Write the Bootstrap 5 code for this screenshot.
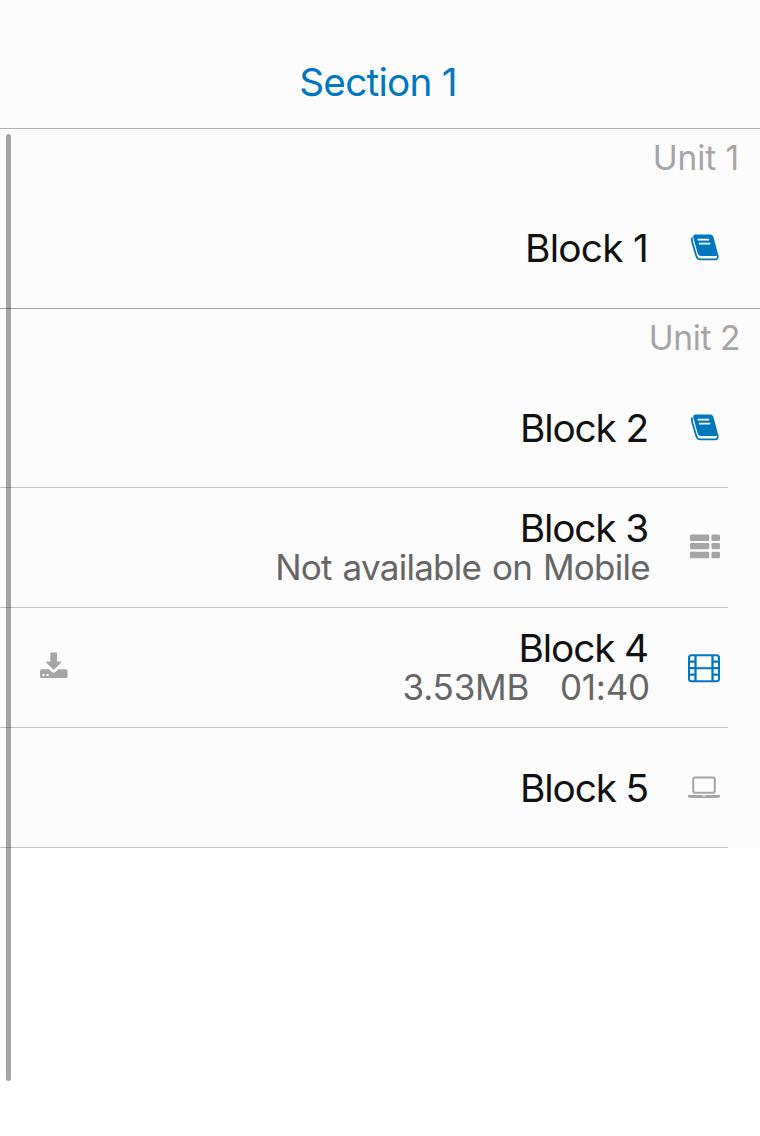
<!DOCTYPE html>
<html lang="en">
<head>
<meta charset="utf-8">
<meta name="viewport" content="width=device-width, initial-scale=1">
<title>Section 1</title>
<link href="https://cdn.jsdelivr.net/npm/bootstrap@5.3.0/dist/css/bootstrap.min.css" rel="stylesheet">
<style>
body{font-family:Inter,"Liberation Sans",sans-serif;background:#fff;color:#111;height:1136px;overflow:hidden}
.panel{background:#fcfcfc}
.top-bar{height:129px;padding:58px 4px 0 0;border-bottom:1px solid #b0b0b0;color:#0078bf;font-size:38.8px;line-height:48px;letter-spacing:-.78px}
.unit-label{height:59px;padding:7px 20px 0 0;font-size:33.5px;line-height:44px;color:#a6a5a5}
.unit-first .unit-label{padding-right:21px;letter-spacing:-.1px}
.unit-last .unit-label{letter-spacing:-.4px}
.block-row{height:120px;padding:0 40px}
.block-row+.block-row::before,.unit-last .block-row:last-child::after{content:"";position:absolute;left:0;right:32px;height:1px;background:#c4c4c6;top:-1px}
.unit-last .block-row:last-child::after{top:auto;bottom:0}
.unit-first{border-bottom:1px solid #a2a2a2}
.block-title{font-size:38.8px;line-height:40px;letter-spacing:-1.15px;padding-right:2px}
.unit-first .block-title{letter-spacing:-.75px}
.block-meta{font-size:35px;line-height:39px;color:#666;white-space:pre}
.two-lines{padding-bottom:2px}
.meta-note{letter-spacing:-.72px;word-spacing:1.6px}
.meta-size{letter-spacing:-.2px;word-spacing:.6px}
.block-icon{width:32px;margin-left:38px}
.blue{color:#0078bf}.gray{color:#a6a4a4}
svg{display:block;overflow:visible}
.scroll-thumb{left:6px;top:134px;width:5px;height:947px;border-radius:3px;background:rgba(0,0,0,.35)}
</style>
</head>
<body class="position-relative">
<svg width="0" height="0" class="position-absolute" aria-hidden="true">
<symbol id="book" viewBox="0 0 32 28"><path fill="currentColor" d="M7.500 .4H22Q24.600 .4 25.300 2.600L29.800 19.300Q30.500 22 28 22H12.800Q10.500 22 9.700 19.500L5.400 4Q4.500 .4 7.500 .4Z"/><path fill="none" stroke="currentColor" stroke-width="1.800" stroke-linecap="round" stroke-linejoin="round" d="M4 4.200Q3.600 6 4.300 8.400L8.300 22Q9.200 25.400 12.500 25.400H27Q30.300 25.400 29.700 21.500"/><path stroke="#fff" stroke-width="1.900" d="M9.600 5.600H21M10.900 9.600H22.200"/></symbol>
</svg>
<main class="panel">
<header class="top-bar text-center">Section 1</header>
<section class="unit-first">
<div class="unit-label text-end">Unit 1</div>
<div class="block-row d-flex align-items-center justify-content-end position-relative">
<div class="block-title">Block 1</div>
<div class="block-icon blue"><svg width="32" height="28"><use href="#book"/></svg></div>
</div>
</section>
<section class="unit-last">
<div class="unit-label text-end">Unit 2</div>
<div class="block-row d-flex align-items-center justify-content-end position-relative">
<div class="block-title">Block 2</div>
<div class="block-icon blue"><svg width="32" height="28"><use href="#book"/></svg></div>
</div>
<div class="block-row d-flex align-items-center justify-content-end position-relative">
<div class="text-end two-lines"><div class="block-title">Block 3</div><div class="block-meta meta-note">Not available on Mobile</div></div>
<div class="block-icon gray"><svg width="32" height="28" fill="currentColor"><rect x="2" y=".4" width="19.200" height="6.600" rx="1.300"/><rect x="23.500" y=".4" width="8.500" height="6.600" rx="1.300"/><rect x="2" y="9" width="19.200" height="6.300" rx="1.300"/><rect x="23.500" y="9" width="8.500" height="6.300" rx="1.300"/><rect x="2" y="17.700" width="19.200" height="6.500" rx="1.300"/><rect x="23.500" y="17.700" width="8.500" height="6.500" rx="1.300"/></svg></div>
</div>
<div class="block-row d-flex align-items-center position-relative">
<div class="gray me-auto pb-1"><svg width="28" height="28" fill="currentColor"><path d="M11.200 .4H16.200Q17 .4 17 1.200V9.500H20.500Q21.800 9.600 20.800 10.900L14.400 17.200Q13.700 17.900 13 17.200L6.600 10.900Q5.600 9.600 6.900 9.500H10.400V1.200Q10.400 .4 11.200 .4Z"/><path fill-rule="evenodd" d="M1.500 17.200H9L12 20.100Q13.700 21.400 15.400 20.100L18.400 17.200H26Q27.500 17.200 27.500 18.700V24.500Q27.500 26 26 26H1.500Q0 26 0 24.500V18.700Q0 17.200 1.500 17.200ZM2.300 22V24H4.500V22ZM6.400 22V24H8.600V22Z"/></svg></div>
<div class="text-end two-lines"><div class="block-title">Block 4</div><div class="block-meta meta-size">3.53MB   01:40</div></div>
<div class="block-icon blue"><svg width="32" height="28" fill="none" stroke="currentColor" stroke-width="2"><rect x="1" y="1.200" width="30" height="26" rx="2.500"/><path stroke-width="2.300" d="M7.500 1V27M24.500 1V27M1 7.700H7.300M1 14.200H7.300M1 20.700H7.300M24.700 7.700H31M24.700 14.200H31M24.700 20.700H31"/><path d="M7.300 14.200H24.700"/></svg></div>
</div>
<div class="block-row d-flex align-items-center justify-content-end position-relative">
<div class="block-title">Block 5</div>
<div class="block-icon gray"><svg width="32" height="28"><rect x="5.200" y="3.500" width="21.600" height="15.300" rx="2" fill="none" stroke="currentColor" stroke-width="2"/><path fill="currentColor" d="M0 21H32V22.500Q31.500 24 29 24H3Q.5 24 0 22.500Z"/><path stroke="#fcfcfc" d="M14.500 22H17.500"/></svg></div>
</div>
</section>
</main>
<div class="scroll-thumb position-absolute"></div>
<script src="https://cdn.jsdelivr.net/npm/bootstrap@5.3.0/dist/js/bootstrap.bundle.min.js"></script>
</body>
</html>
